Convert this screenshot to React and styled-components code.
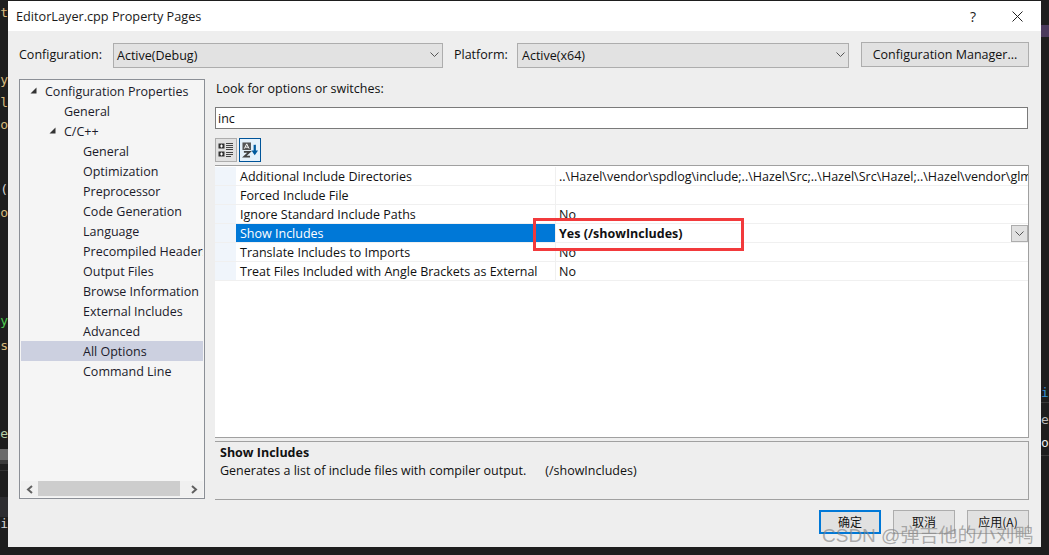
import React from 'react';
import styled, { createGlobalStyle } from 'styled-components';

const Global = createGlobalStyle`
    html, body {
        margin: 0;
        padding: 0;
        background: #1e1e1e;
    }
    * { box-sizing: border-box; }
`;

const Page = styled.div`
    position: relative;
    width: 1049px;
    height: 555px;
    display: flex;
    overflow: hidden;
    background: #1e1e1e;
    font-family: "Open Sans", "Noto Sans", sans-serif;
    font-size: 12.5px;
    color: #111;
`;

const Strip = styled.div`
    position: relative;
    width: 8px;
    flex: none;
    overflow: hidden;
    font-family: "DejaVu Sans Mono", monospace;
    font-size: 13px;
`;

const CodeBit = styled.span`
    position: absolute;
    top: ${p => p.$top}px;
    ${p => p.$right ? 'left: 0;' : 'right: 0;'}
    color: ${p => p.$color};
    white-space: nowrap;
`;

const StripBand = styled.div`
    position: absolute;
    left: 0;
    right: 0;
    top: ${p => p.$top}px;
    height: ${p => p.$height}px;
    background: ${p => p.$color};
`;

const Dialog = styled.div`
    width: 1033px;
    height: 546px;
    margin-top: 1px;
    flex: none;
    display: flex;
    flex-direction: column;
    background: #eeeeee;
`;

const TitleBar = styled.div`
    height: 30px;
    flex: none;
    display: flex;
    align-items: center;
    padding: 0 18px 0 8px;
    background: #fff;
    font-size: 12.7px;
    color: #1a1a1a;
`;

const TitleText = styled.div`
    flex: 1;
`;

const TitleHelp = styled.div`
    width: 14px;
    margin-right: 32px;
    text-align: center;
    font-size: 14px;
`;

const Content = styled.div`
    flex: 1;
    display: flex;
    flex-direction: column;
    padding: 11px 12px 0 11px;
`;

const ConfigRow = styled.div`
    height: 25px;
    display: flex;
    align-items: center;
`;

const ConfigLabel = styled.div`
    width: ${p => p.$width}px;
    padding-left: ${p => p.$indent || 0}px;
    flex: none;
`;

const Select = styled.div`
    width: ${p => p.$width}px;
    height: 25px;
    flex: none;
    display: flex;
    align-items: center;
    justify-content: space-between;
    padding: 0 3px 0 ${p => p.$textInset || 3}px;
    margin-top: 1px;
    background: #e2e2e2;
    border: 1px solid #adadad;
`;

const ManagerButton = styled.div`
    width: 168px;
    height: 25px;
    margin-left: 12px;
    flex: none;
    display: flex;
    align-items: center;
    justify-content: center;
    background: #e1e1e1;
    border: 1px solid #adadad;
`;

const Main = styled.div`
    height: 421px;
    margin-top: 12px;
    display: flex;
    align-items: flex-start;
    gap: 10px;
`;

const TreePanel = styled.div`
    width: 186px;
    height: 420px;
    flex: none;
    display: flex;
    flex-direction: column;
    background: #f5f5f5;
    border: 1px solid #8b8f96;
    padding: 1px;
`;

const TreeList = styled.div`
    flex: 1;
    overflow: hidden;
`;

const TreeRow = styled.div`
    position: relative;
    height: 20px;
    display: flex;
    align-items: center;
    padding-left: ${p => 24 + p.$level * 19}px;
    white-space: nowrap;
    overflow: hidden;
    color: #1b1b2b;
    background: ${p => p.$selected ? '#ccd0e0' : 'transparent'};
`;

const TreeArrow = styled.svg`
    position: absolute;
    left: ${p => 9 + p.$level * 19}px;
    top: 6px;
`;

const HScroll = styled.div`
    height: 16px;
    flex: none;
    display: flex;
    align-items: center;
    background: #f0f0f0;
`;

const HThumb = styled.div`
    width: 142px;
    height: 15px;
    align-self: flex-start;
    background: #cdcdcd;
`;

const ScrollEnd = styled.div`
    width: 17px;
    display: flex;
    justify-content: center;
    margin-left: ${p => p.$last ? 'auto' : '0'};
`;

const Right = styled.div`
    flex: 1;
    min-width: 0;
    display: flex;
    flex-direction: column;
`;

const LookLabel = styled.div`
    height: 28px;
    display: flex;
    align-items: flex-start;
    padding-top: 1px;
    padding-left: 1px;
`;

const Search = styled.div`
    width: 813px;
    height: 22px;
    display: flex;
    align-items: center;
    padding: 1px 0 0 2px;
    background: #fff;
    border: 1px solid #7a7a7a;
`;

const Toolbar = styled.div`
    height: 24px;
    margin: 9px 0 3px;
    display: flex;
    gap: 2px;
`;

const ToolButton = styled.div`
    width: 22px;
    height: 24px;
    display: flex;
    align-items: center;
    justify-content: center;
    background: ${p => p.$active ? '#e5f1fb' : '#e1e1e1'};
    border: ${p => p.$active ? '1px solid #005499' : '1px solid #adadad'};
`;

const Grid = styled.div`
    height: 273px;
    flex: none;
    display: flex;
    flex-direction: column;
    background: #fff;
    border-top: 1px solid #a0a0a0;
    border-right: 1px solid #a0a0a0;
    border-bottom: 1px solid #a0a0a0;
    padding-top: 1px;
`;

const GridRow = styled.div`
    height: 19px;
    flex: none;
    display: flex;
    border-bottom: 1px solid #f0f0f0;
`;

const Gutter = styled.div`
    width: 21px;
    flex: none;
    background: #f0f5fb;
`;

const NameCell = styled.div`
    width: 320px;
    flex: none;
    display: flex;
    align-items: center;
    padding: 1px 0 0 4px;
    white-space: nowrap;
    border-right: 1px solid #f0f0f0;
    background: ${p => p.$selected ? '#0078d7' : 'transparent'};
    color: ${p => p.$selected ? '#fff' : 'inherit'};
    font-weight: ${p => p.$selected ? 500 : 400};
`;

const ValueCell = styled.div`
    flex: 1;
    min-width: 0;
    display: flex;
    align-items: center;
    justify-content: space-between;
    padding: 1px 0 0 3px;
    white-space: nowrap;
    overflow: hidden;
    font-weight: ${p => p.$bold ? 700 : 400};
`;

const CellDrop = styled.div`
    width: 17px;
    height: 17px;
    flex: none;
    display: flex;
    align-items: center;
    justify-content: center;
    background: #e1e1e1;
    border: 1px solid #adadad;
`;

const Description = styled.div`
    height: 59px;
    flex: none;
    margin-top: 3px;
    padding: 2px 5px;
    border-top: 1px solid #a0a0a0;
    border-right: 1px solid #a0a0a0;
    border-bottom: 1px solid #a0a0a0;
    line-height: 18px;
`;

const DescTitle = styled.div`
    font-weight: 700;
`;

const DescSwitch = styled.span`
    margin-left: 19px;
`;

const Footer = styled.div`
    height: 24px;
    margin-top: 10px;
    display: flex;
    justify-content: flex-end;
    gap: 12px;
    font-family: "Noto Sans CJK SC", sans-serif;
    font-size: 12px;
`;

const FooterButton = styled.div`
    width: 62px;
    height: 24px;
    display: flex;
    align-items: center;
    justify-content: center;
    padding-bottom: 2px;
    background: #e1e1e1;
    border: ${p => p.$primary ? '2px solid #0078d7' : '1px solid #adadad'};
`;

const RedBox = styled.div`
    position: absolute;
    left: 533px;
    top: 218px;
    width: 211px;
    height: 33px;
    border: 3px solid #f23a3c;
`;

const Watermark = styled.div`
    position: absolute;
    left: 822px;
    top: 524px;
    font-family: "Liberation Sans", "Noto Sans CJK SC", sans-serif;
    font-size: 19px;
    line-height: 24px;
    white-space: nowrap;
    color: rgba(130, 130, 130, 0.65);
`;

const Chevron = () => (
    <svg width="9" height="6" viewBox="0 0 9 6">
        <path d="M0.5 0.5 L4.5 4.5 L8.5 0.5" fill="none" stroke="#555" strokeWidth="1" />
    </svg>
);

const CloseIcon = () => (
    <svg width="11" height="11" viewBox="0 0 11 11">
        <path d="M0.5 0.5 L10.5 10.5 M10.5 0.5 L0.5 10.5" stroke="#222" strokeWidth="1" />
    </svg>
);

const Arrow = ({level}) => (
    <TreeArrow $level={level} width="7" height="7" viewBox="0 0 7 7">
        <path d="M6.5 0.5 V6.5 H0.5 Z" fill="#333" />
    </TreeArrow>
);

const ScrollArrow = ({flip}) => (
    <svg width="7" height="9" viewBox="0 0 7 9">
        <path d={flip ? 'M1 1 L5 4.5 L1 8' : 'M6 1 L2 4.5 L6 8'} fill="none" stroke="#606060" strokeWidth="2" />
    </svg>
);

const CategorizedIcon = () => (
    <svg width="16" height="16" viewBox="0 0 16 16">
        <rect x="0.5" y="1.5" width="6" height="5" fill="#333" />
        <path d="M2 4 H5 M3.5 2.5 V5.5" stroke="#fff" strokeWidth="1" />
        <rect x="0.5" y="9.5" width="6" height="5" fill="#333" />
        <path d="M2 12 H5 M3.5 10.5 V13.5" stroke="#fff" strokeWidth="1" />
        <path d="M8 1.5 H15 M8 3.5 H15 M8 5.5 H15 M8 7.5 H15 M8 10.5 H15 M8 12.5 H15 M8 14.5 H13" stroke="#444" strokeWidth="1" />
    </svg>
);

const SortIcon = () => (
    <svg width="17" height="17" viewBox="0 0 18 18">
        <rect x="0.5" y="0.5" width="9" height="8" fill="#555" />
        <path d="M2.5 7 L5 2 L7.5 7 M3.5 5.5 H6.5" fill="none" stroke="#fff" strokeWidth="1" />
        <path d="M2 10.5 H8 L2.5 15.5 H8.5" fill="none" stroke="#444" strokeWidth="2" />
        <path d="M13.5 3 V12" stroke="#005a9e" strokeWidth="2.4" />
        <path d="M10 9 H17 L13.5 14 Z" fill="#005a9e" />
    </svg>
);

const treeItems = [
    {label: 'Configuration Properties', level: 0, open: true},
    {label: 'General', level: 1},
    {label: 'C/C++', level: 1, open: true},
    {label: 'General', level: 2},
    {label: 'Optimization', level: 2},
    {label: 'Preprocessor', level: 2},
    {label: 'Code Generation', level: 2},
    {label: 'Language', level: 2},
    {label: 'Precompiled Headers', level: 2},
    {label: 'Output Files', level: 2},
    {label: 'Browse Information', level: 2},
    {label: 'External Includes', level: 2},
    {label: 'Advanced', level: 2},
    {label: 'All Options', level: 2, selected: true},
    {label: 'Command Line', level: 2},
];

const gridRows = [
    {name: 'Additional Include Directories', value: '..\\Hazel\\vendor\\spdlog\\include;..\\Hazel\\Src;..\\Hazel\\Src\\Hazel;..\\Hazel\\vendor\\glm'},
    {name: 'Forced Include File', value: ''},
    {name: 'Ignore Standard Include Paths', value: 'No'},
    {name: 'Show Includes', value: 'Yes (/showIncludes)', selected: true},
    {name: 'Translate Includes to Imports', value: 'No'},
    {name: 'Treat Files Included with Angle Brackets as External', value: 'No'},
];

const leftCode = [
    {top: 5, text: 't', color: '#d7ba7d'},
    {top: 72, text: 'y', color: '#d7ba7d'},
    {top: 95, text: 'yl', color: '#d7ba7d'},
    {top: 117, text: 'o', color: '#d7ba7d'},
    {top: 182, text: '(', color: '#d4d4d4'},
    {top: 205, text: 'o', color: '#d7ba7d'},
    {top: 313, text: 'y', color: '#4ec94e'},
    {top: 338, text: 's', color: '#d7ba7d'},
    {top: 426, text: 'e', color: '#b5cea8'},
    {top: 516, text: 'i', color: '#d4d4d4'},
];

const App = () => {
    return (
        <Page>
            <Global />
            <Strip>
                {leftCode.map((bit, i) => (
                    <CodeBit key={'left-' + i} $top={bit.top} $color={bit.color}>{bit.text}</CodeBit>
                ))}
                <StripBand $top={449} $height={11} $color="#6a6a6a" />
                <StripBand $top={460} $height={4} $color="#3a3a3a" />
                <StripBand $top={470} $height={1} $color="#333" />
                <StripBand $top={497} $height={20} $color="#2d2d30" />
            </Strip>
            <Dialog>
                <TitleBar>
                    <TitleText>EditorLayer.cpp Property Pages</TitleText>
                    <TitleHelp>?</TitleHelp>
                    <CloseIcon />
                </TitleBar>
                <Content>
                    <ConfigRow>
                        <ConfigLabel $width={94}>Configuration:</ConfigLabel>
                        <Select $width={330}>Active(Debug)<Chevron /></Select>
                        <ConfigLabel $width={74} $indent={11}>Platform:</ConfigLabel>
                        <Select $width={332} $textInset={4}>Active(x64)<Chevron /></Select>
                        <ManagerButton>Configuration Manager...</ManagerButton>
                    </ConfigRow>
                    <Main>
                        <TreePanel>
                            <TreeList>
                                {treeItems.map((item, i) => (
                                    <TreeRow key={'tree-' + i} $level={item.level} $selected={item.selected}>
                                        {item.open ? <Arrow level={item.level} /> : null}
                                        {item.label}
                                    </TreeRow>
                                ))}
                            </TreeList>
                            <HScroll>
                                <ScrollEnd><ScrollArrow /></ScrollEnd>
                                <HThumb />
                                <ScrollEnd $last><ScrollArrow flip /></ScrollEnd>
                            </HScroll>
                        </TreePanel>
                        <Right>
                            <LookLabel>Look for options or switches:</LookLabel>
                            <Search>inc</Search>
                            <Toolbar>
                                <ToolButton><CategorizedIcon /></ToolButton>
                                <ToolButton $active><SortIcon /></ToolButton>
                            </Toolbar>
                            <Grid>
                                {gridRows.map((row, i) => (
                                    <GridRow key={'row-' + i}>
                                        <Gutter />
                                        <NameCell $selected={row.selected}>{row.name}</NameCell>
                                        <ValueCell $bold={row.selected}>
                                            {row.value}
                                            {row.selected ? <CellDrop><Chevron /></CellDrop> : null}
                                        </ValueCell>
                                    </GridRow>
                                ))}
                            </Grid>
                            <Description>
                                <DescTitle>Show Includes</DescTitle>
                                <div>Generates a list of include files with compiler output.<DescSwitch>(/showIncludes)</DescSwitch></div>
                            </Description>
                        </Right>
                    </Main>
                    <Footer>
                        <FooterButton $primary>确定</FooterButton>
                        <FooterButton>取消</FooterButton>
                        <FooterButton>应用(A)</FooterButton>
                    </Footer>
                </Content>
            </Dialog>
            <Strip>
                <StripBand $top={25} $height={12} $color="#4b3a5c" />
                <StripBand $top={402} $height={1} $color="#3a3a3a" />
                <StripBand $top={455} $height={1} $color="#3a3a3a" />
                <CodeBit $right $top={385} $color="#3794d6">i</CodeBit>
                <CodeBit $right $top={412} $color="#bbb">e</CodeBit>
                <CodeBit $right $top={435} $color="#eee">o</CodeBit>
            </Strip>
            <RedBox />
            <Watermark>CSDN @弹吉他的小刘鸭</Watermark>
        </Page>
    );
}

export default App;
